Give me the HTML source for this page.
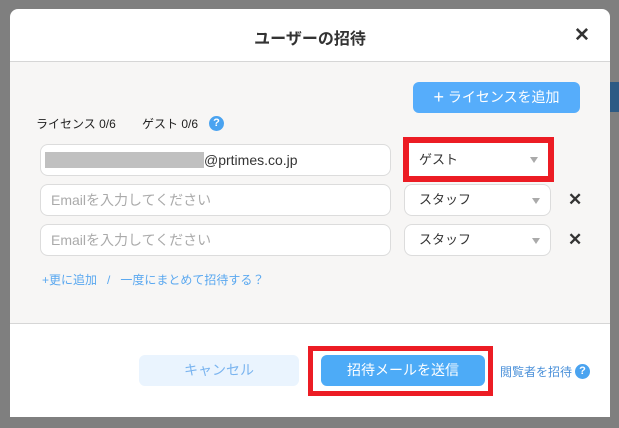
<!DOCTYPE html>
<html><head><meta charset="utf-8"><style>
*{box-sizing:border-box;margin:0;padding:0}
body{width:619px;height:428px;background:#7f7f7f;position:relative;overflow:hidden;font-family:"Liberation Sans","Noto Sans CJK JP",sans-serif;color:#333}
.a{position:absolute}
.modal{left:10px;top:9px;width:600px;height:408px;background:#fff;border-radius:8px 8px 0 0;overflow:hidden}
.body{left:0;top:52px;width:600px;height:263px;background:#f7f6f5;border-top:1px solid #d6d6d6;border-bottom:1px solid #d6d6d6}
.inp{background:#fff;border:1px solid #dcdcdc;border-radius:8px;height:32px;font-size:14px;line-height:30px;padding-left:10px;color:#aaa}
.sel{background:#fff;border:1px solid #dcdcdc;border-radius:8px;height:32px;font-size:13px;line-height:30px;padding-left:14px;color:#333}
.tri{position:absolute;right:10px;top:13px;width:0;height:0;border-left:4px solid transparent;border-right:4px solid transparent;border-top:6px solid #aaa}
.q{width:15px;height:15px;border-radius:50%;background:#4aa3f0;color:#fff;font-size:11px;font-weight:bold;text-align:center;line-height:15px}
.x{font-size:17px;font-weight:bold;color:#333;line-height:20px}
</style></head><body>
<div class="a" style="left:610px;top:82px;width:9px;height:30px;background:#2d5a84"></div>
<div class="a modal">
 <div class="a" style="left:0;top:16px;width:600px;text-align:center;font-size:16px;font-weight:bold;color:#333">ユーザーの招待</div>
 <div class="a x" style="left:564px;top:17px;font-size:19px">✕</div>
 <div class="a body"></div>
</div>
<div class="a" style="left:413px;top:82px;width:167px;height:31px;background:#56adfb;border-radius:6px;color:#fff;font-size:14px;line-height:31px;text-align:center"><span style="font-size:18px;vertical-align:-1px">+</span> ライセンスを追加</div>
<div class="a" style="left:36px;top:115px;font-size:12px;color:#222">ライセンス 0/6</div>
<div class="a" style="left:142px;top:115px;font-size:12px;color:#222">ゲスト 0/6</div>
<div class="a q" style="left:209px;top:116px">?</div>

<div class="a inp" style="left:40px;top:144px;width:351px;color:#333"><span style="display:inline-block;width:159px;height:16px;background:#c0c0c0;vertical-align:-3px;margin-left:-6px"></span>@prtimes.co.jp</div>
<div class="a" style="left:403px;top:137px;width:151px;height:45px;background:#ec1c24"></div>
<div class="a" style="left:409px;top:143px;width:139px;height:33px;background:#fff;font-size:13px;line-height:33px;padding-left:10px">ゲスト<div class="tri" style="top:14px"></div></div>

<div class="a inp" style="left:40px;top:184px;width:351px">Emailを入力してください</div>
<div class="a sel" style="left:404px;top:184px;width:147px">スタッフ<div class="tri"></div></div>
<div class="a x" style="left:568px;top:190px">✕</div>

<div class="a inp" style="left:40px;top:224px;width:351px">Emailを入力してください</div>
<div class="a sel" style="left:404px;top:224px;width:147px">スタッフ<div class="tri"></div></div>
<div class="a x" style="left:568px;top:230px">✕</div>

<div class="a" style="left:42px;top:271px;font-size:12px;color:#5aa8f0">+更に追加 &nbsp;&nbsp;/&nbsp;&nbsp; 一度にまとめて招待する？</div>

<div class="a" style="left:139px;top:355px;width:160px;height:31px;background:#eaf4fe;border-radius:6px;color:#7ab4ef;font-size:14px;line-height:31px;text-align:center">キャンセル</div>
<div class="a" style="left:308px;top:346px;width:185px;height:50px;background:#ec1c24"></div>
<div class="a" style="left:313px;top:351px;width:175px;height:40px;background:#fff"></div>
<div class="a" style="left:321px;top:355px;width:164px;height:31px;background:#4dabf7;border-radius:6px;color:#fff;font-size:14px;line-height:31px;text-align:center">招待メールを送信</div>
<div class="a" style="left:500px;top:363px;font-size:12px;color:#4a90d9">閲覧者を招待</div>
<div class="a q" style="left:575px;top:364px">?</div>
</body></html>
